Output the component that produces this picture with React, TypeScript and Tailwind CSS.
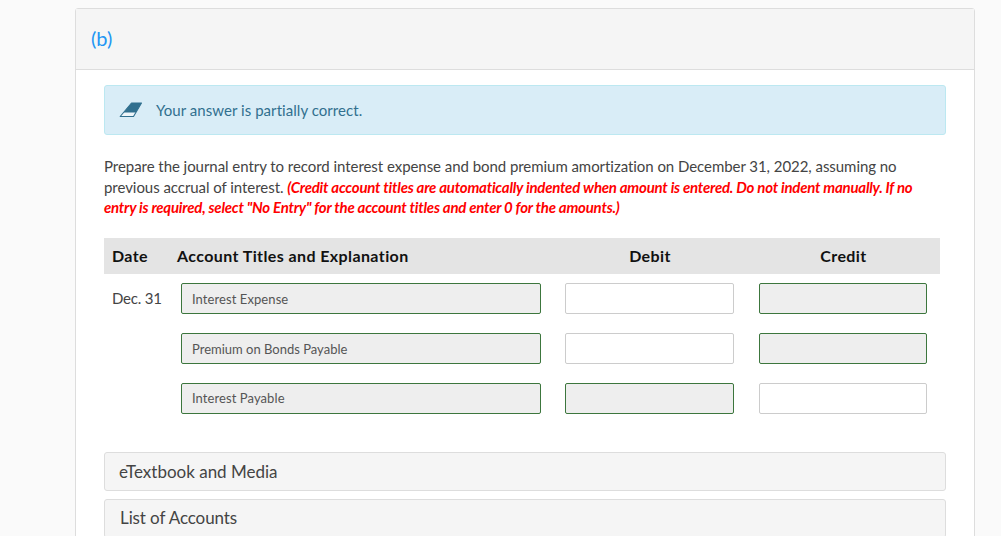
import { ReactNode } from "react";

type Row = {
  date?: string;
  account: string;
  textLine: string;
  debitLocked: boolean;
  creditLocked: boolean;
};

const rows: Row[] = [
  { date: "Dec. 31", account: "Interest Expense", textLine: "leading-[31px]", debitLocked: false, creditLocked: true },
  { account: "Premium on Bonds Payable", textLine: "leading-[31px] tracking-[0px]", debitLocked: false, creditLocked: true },
  { account: "Interest Payable", textLine: "leading-[29px]", debitLocked: true, creditLocked: false },
];

function Field({ locked, className, children }: { locked: boolean; className: string; children?: ReactNode }) {
  return (
    <div
      className={
        locked
          ? `h-[31px] rounded-[2px] border border-[#3c763d] bg-[#eeeeee] text-[13px] text-[#555555] ${className}`
          : `h-[31px] rounded-[2px] border border-[#cccccc] bg-white ${className}`
      }
    >
      {children}
    </div>
  );
}

function Eraser() {
  return (
    <svg width="23" height="16" viewBox="0 0 23 16" className="block">
      <path d="M12.5 1H22.5L14.5 14.5H1.2z" fill="#eef6fa" stroke="#31708f" strokeWidth="1.1" strokeLinejoin="round" />
      <path d="M12.5 1H22.5L16.9 10.5H4.5z" fill="#31708f" />
    </svg>
  );
}

export default function App() {
  return (
    <div className="h-[536px] overflow-hidden bg-[#fafafa] pt-2 font-['Lato','Noto_Sans',sans-serif] text-[#333333]">
      <div className="mx-[75px] h-[600px] w-[900px] rounded-t-[3px] border border-[#dddddd] bg-white">
        <div className="h-[61px] border-b border-[#dddddd] bg-[#f5f5f5] pl-[15px] pt-[16px] text-[20px] leading-[26px] text-[#2196f3]">
          (b)
        </div>

        <div className="pl-[28px] pr-[28px] pt-[15px]">
          <div className="flex h-[50px] items-center rounded-[3px] border border-[#bce8f1] bg-[#d9edf7] pl-[14px] text-[15px] text-[#31708f]">
            <Eraser />
            <span className="ml-[14px] pt-px tracking-[0.05px]">Your answer is partially correct.</span>
          </div>

          <p className="-mt-px w-[815px] pt-[22px] text-[15px] leading-[20.5px] tracking-[-0.05px] text-[#444444]">
            Prepare the journal entry to record interest expense and bond premium amortization on December 31, 2022, assuming no previous accrual of interest.{" "}
            <em className="font-bold tracking-[-0.23px] text-[#ff0000]">
              (Credit account titles are automatically indented when amount is entered. Do not indent manually. If no entry is required, select "No Entry" for the account titles and enter 0 for the amounts.)
            </em>
          </p>

          <div className="mt-[20px] w-[836px]">
            <div className="flex h-[36px] items-center bg-[#e4e4e4] text-[16px] font-bold tracking-[0.4px] text-[#111111]">
              <div className="w-[73px] pl-2">Date</div>
              <div className="w-[383px]">Account Titles and Explanation</div>
              <div className="w-[180px] text-center">Debit</div>
              <div className="w-[200px] pl-[7px] text-center">Credit</div>
            </div>

            <div className="mt-[9px] flex flex-col gap-[19px]">
              {rows.map((row) => (
                <div key={row.account} className="flex items-center">
                  <div className="w-[77px] pl-2 text-[15px] tracking-[-0.2px] text-[#444444]">{row.date}</div>
                  <Field locked className={`w-[360px] pl-[10px] tracking-[0.08px] ${row.textLine}`}>
                    {row.account}
                  </Field>
                  <Field locked={row.debitLocked} className="ml-[24px] w-[169px]" />
                  <Field locked={row.creditLocked} className="ml-[25px] w-[168px]" />
                </div>
              ))}
            </div>
          </div>

          <div className="mt-[38px] flex flex-col gap-2">
            <div className="h-[39px] rounded-[3px] border border-[#dddddd] bg-[#f5f5f5] pl-[14px] text-[17px] leading-[37px] text-[#444444]">
              eTextbook and Media
            </div>
            <div className="h-[39px] rounded-[3px] border border-[#dddddd] bg-[#f5f5f5] pl-[15px] text-[17px] leading-[35px] tracking-[-0.1px] text-[#444444]">
              List of Accounts
            </div>
          </div>
        </div>
      </div>
    </div>
  );
}
